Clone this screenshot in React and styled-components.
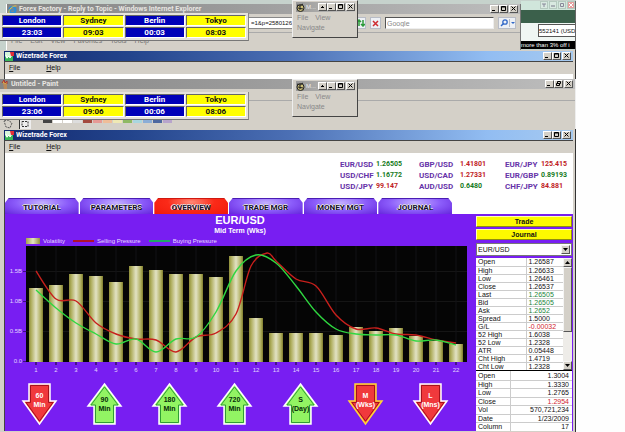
import React from "react";
import styled, { createGlobalStyle, css } from "styled-components";

const GRAY = "#d4d0c8";
const PURPLE = "#781ef2";
const SANS = '"Liberation Sans", Arial, sans-serif';
const BOLD_FACE = 'Roboto, "Liberation Sans", Arial, sans-serif';

const Global = createGlobalStyle`
  * { box-sizing: border-box; }
  body { margin: 0; background: #fefefe; font-family: ${SANS}; font-size: 7px; line-height: 8px; color: #111; }
  button, input, select { font: inherit; color: inherit; margin: 0; padding: 0; border: 0; border-radius: 0; }
  svg { display: block; }
`;

const Desktop = styled.main`
  display: flex;
  flex-direction: column;
  min-height: 100vh;
  padding-right: 49px;
`;

/* Window chrome */
const TitleBar = styled.header`
  display: flex;
  align-items: center;
  gap: 2px;
  height: 10px;
  padding: 0 2px 0 1px;
  color: ${(p) => (p.$active ? "#fff" : "#e8e6e2")};
  font: bold 7px/8px ${BOLD_FACE};
  background: ${(p) =>
    p.$active
      ? "linear-gradient(90deg, #12296f, #23448c 22%, #4b6fb4 50%, #92bdf2 85%, #a6caf0)"
      : "linear-gradient(90deg, #858585, #999 40%, #bdbdbd)"};
`;
const Title = styled.span`
  flex: 1;
  min-width: 0;
  overflow: hidden;
  white-space: nowrap;
`;
const Controls = styled.div`
  display: flex;
  button:last-child { margin-left: 1px; }
`;
const ControlButton = styled.button`
  width: 9px;
  height: 8px;
  background: ${GRAY};
  border: 1px solid;
  border-color: #fff #555 #555 #fff;
  svg { width: 7px; height: 6px; }
`;
const glyphs = {
  min: <path d="M1 4.500h3" />,
  max: <path d="M1.500 .5h4v4h-4zM1.500 1h4" />,
  restore: <path d="M2.500 .5h3v2h-3zM1.500 2.500h3v2h-3z" />,
  close: <path d="M1.500 .5l4 4M5.500 .5l-4 4" />,
  roll: <path d="M2 3.500h3M3 2.500h1" />,
};
const names = { min: "Minimize", max: "Maximize", restore: "Restore", close: "Close", roll: "Roll up" };
const WindowControls = ({ kinds = ["min", "max", "close"] }) => (
  <Controls>
    {kinds.map((k) => (
      <ControlButton key={k} aria-label={names[k]}>
        <svg viewBox="0 0 7 6" fill="none" stroke="#000">{glyphs[k]}</svg>
      </ControlButton>
    ))}
  </Controls>
);

const MenuBar = styled.nav`
  display: flex;
  align-items: center;
  gap: ${(p) => (p.$dim ? 8 : 26)}px;
  height: ${(p) => (p.$dim ? 16 : 12)}px;
  padding-left: 4px;
  background: ${GRAY};
  color: ${(p) => (p.$dim ? "#777" : "#111")};
`;
const MenuItem = styled.button`
  background: none;
  &::first-letter { text-decoration: ${(p) => (p.$plain ? "none" : "underline")}; }
`;

const WizeIcon = () => (
  <svg width="9" height="9" viewBox="0 0 9 9">
    <rect width="8" height="9" fill="#d5f5d8" />
    <path d="M0 8V4l2 3 2-3 1 2 3-4v7H0z" fill="#38b657" />
    <path d="M1 3l1 3 2-2 1 2 2-3" fill="none" stroke="#fff" />
    <path d="M5 0h4v4H6z" fill="#e32e36" />
  </svg>
);

/* Browser window with the page behind it */
const TopRow = styled.section`
  display: flex;
  height: 50px;
  background: #c6d2cc;
`;
const Browser = styled.div`
  flex: 1;
  min-width: 0;
  margin: 4px 0 0 6px;
  border-left: 1px solid #fff;
  border-right: 1px solid #777;
  background: ${GRAY};
`;
const AddressRow = styled.div`
  display: flex;
  align-items: center;
  gap: 4px;
  height: 19px;
  padding-right: 4px;
  border-bottom: 1px solid #aaa;
`;
const AddressInput = styled.input`
  flex: 1;
  min-width: 0;
  height: 12px;
  padding-left: 243px;
  background: #fff;
  border: 1px solid #888;
  font-size: 6px;
`;
const ToolButton = styled.button`
  display: grid;
  place-items: center;
  width: ${(p) => (p.$wide ? 18 : 11)}px;
  height: 12px;
  background: #edf0f5;
  border: 1px solid #b8bcc6;
`;
const SearchInput = styled.input`
  width: 109px;
  height: 12px;
  padding-left: 1px;
  background: #fff;
  border: 1px solid;
  border-color: #555 #eee #eee #555;
  color: #888;
  &::placeholder { color: #888; opacity: 1; }
`;
const Behind = styled.div`
  display: flex;
  flex-direction: column;
  width: 55px;
  margin-top: 1px;
  border-right: 1px solid #666;
`;
const BehindTitle = styled.div`
  display: flex;
  justify-content: flex-end;
  gap: 1px;
  height: 9px;
  background: #d0e6db;
`;
const FaintButton = styled.button`
  display: grid;
  place-items: center;
  width: 8px;
  height: 8px;
  border: 1px solid #b5c9bf;
  background: ${(p) => (p.$red ? "#e6a09f" : "#d9e9e1")};
`;
const GreenBand = styled.div`
  height: 13px;
  background: #3b604b;
`;
const BehindBody = styled.div`
  display: flex;
  justify-content: flex-end;
  height: 18px;
  padding-top: 1px;
  background: #f0f6f3;
`;
const AccountBox = styled.input`
  width: 37px;
  height: 13px;
  border: 1px solid #555;
  border-right: 0;
  background: #fff;
  font-size: 6px;
`;
const Ticker = styled.div`
  height: 8px;
  white-space: nowrap;
  background: #000;
  color: #fff;
  font-size: 6px;
`;

/* Paint window */
const PaintWindow = styled.section`
  height: 50px;
  background: ${GRAY};
  border-right: 1px solid #eee;
`;
const PaintMenuStrip = styled.div`
  height: 12px;
  border-bottom: 1px solid #aaa;
`;
const PaintTools = styled.div`
  display: flex;
  align-items: flex-start;
  gap: 6px;
  height: 28px;
  padding: 18px 0 0 3px;
`;
const Swatches = styled.div`
  display: flex;
  gap: 1px;
  margin-left: 6px;
`;
const Swatch = styled.i`
  width: 9px;
  height: 4px;
  background: ${(p) => p.$color};
`;

/* Floating widgets */
const ClockPanel = styled.div`
  position: absolute;
  z-index: 2;
  top: ${(p) => p.$top}px;
  left: 0;
  width: 249px;
  padding: 1px;
  background: #e6e3dc;
  border-bottom: 1px solid #777;
  border-right: 1px solid #888;
`;
const ClockTable = styled.table`
  width: 100%;
  table-layout: fixed;
  border-spacing: 1px;
  th, td {
    height: 11px;
    padding: 0;
    text-align: center;
    font: bold 8px/9px ${BOLD_FACE};
    border: 1px solid;
    border-color: #666 #fff #fff #666;
    background: #0000b8;
    color: #fff;
  }
  th:nth-child(even), td:nth-child(even) { background: #ffff00; color: #111; }
`;
const Palette = styled.div`
  position: absolute;
  z-index: 3;
  top: ${(p) => p.$top}px;
  left: 292px;
  width: 66px;
  height: 38px;
  padding: 1px 2px 0 3px;
  background: ${GRAY};
  border: 1px solid;
  border-color: #eee #444 #444 #eee;
  color: #888;
`;
const PaletteTitle = styled.div`
  display: flex;
  align-items: center;
  gap: 1px;
  height: 10px;
  margin-bottom: 2px;
  background: linear-gradient(90deg, #999, #c8c6c2);
  color: #eee;
  font-size: 6px;
`;
const PaletteMenu = styled.div`
  display: flex;
  flex-wrap: wrap;
  gap: 2px 7px;
  padding-left: 1px;
`;

const Clocks = ({ top, times }) => (
  <ClockPanel $top={top}>
    <ClockTable>
      <thead><tr>{["London", "Sydney", "Berlin", "Tokyo"].map((c) => <th key={c}>{c}</th>)}</tr></thead>
      <tbody><tr>{times.map((t) => <td key={t}>{t}</td>)}</tr></tbody>
    </ClockTable>
  </ClockPanel>
);
const NavPalette = ({ top }) => (
  <Palette $top={top}>
    <PaletteTitle>
      <svg width="9" height="9" viewBox="0 0 9 9">
        <circle cx="4.5" cy="5" r="3.5" fill="#cfc27a" stroke="#222" />
        <path d="M1 2l3 1 3-2M2 5l5 1M4 3v4" stroke="#222" fill="none" />
      </svg>
      <Title>M...</Title>
      <WindowControls kinds={["roll", "min", "max", "close"]} />
    </PaletteTitle>
    <PaletteMenu>
      <MenuItem $plain>File</MenuItem>
      <MenuItem $plain>View</MenuItem>
      <MenuItem $plain>Navigate</MenuItem>
    </PaletteMenu>
  </Palette>
);

/* Wizetrade window */
const WizeWindow = styled.section`
  display: flex;
  flex-direction: column;
  flex: ${(p) => (p.$grow ? 1 : "none")};
  padding: 1px 2px ${(p) => (p.$grow ? 2 : 0)}px 4px;
  background: ${GRAY};
  border-right: 1px solid #333;
`;
const Client = styled.div`
  display: flex;
  flex-direction: column;
  flex: 1;
  border-left: 1px solid #444;
  border-top: 1px solid #444;
  background: #fff;
`;
const EmptyStrip = styled.div`
  height: 5px;
`;
const Quotes = styled.dl`
  display: grid;
  grid-template-columns: 36px 43px 41px 45px 36px 32px;
  grid-auto-rows: 11px;
  justify-content: end;
  height: 45px;
  margin: 0;
  padding-top: 6px;
  font: bold 8px/11px ${BOLD_FACE};
`;
const Pair = styled.dt`
  color: #6633a8;
`;
const Rate = styled.dd`
  margin: 0;
  font-size: 7px;
  color: ${(p) => (p.$up ? "#157a22" : "#c01c24")};
`;
const Tabs = styled.nav`
  display: grid;
  grid-template-columns: repeat(6, 1fr);
  gap: 1px;
  height: 16px;
  margin-right: 121px;
`;
const Tab = styled.button`
  padding-top: 3px;
  font: bold 8px/12px ${BOLD_FACE};
  color: #15102a;
  text-shadow: -1px 0 #fff, 0 -1px #ddd;
  white-space: nowrap;
  clip-path: polygon(0 30%, 5% 0, 95% 0, 100% 30%, 100% 100%, 0 100%);
  background: ${(p) =>
    p.$active
      ? "radial-gradient(ellipse at 50% 20%, #ff8a78, #fb2a18 45%, #f01a0c)"
      : "radial-gradient(ellipse at 50% 25%, #c3b0ff, #8b5cfa 50%, #6526dc)"};
  border-top: 1px solid ${(p) => (p.$active ? "#d01810" : "#4a1cb4")};
`;
const Body = styled.div`
  display: flex;
  flex: 1;
  background: ${PURPLE};
`;
const ChartPanel = styled.div`
  display: flex;
  flex-direction: column;
  flex: 1;
  min-width: 0;
  color: #fff;
`;
const ChartTitle = styled.h1`
  margin: 0;
  text-align: center;
  font: bold 11px/12px ${SANS};
`;
const ChartSubtitle = styled.h2`
  margin: 0;
  text-align: center;
  font: bold 7px/10px ${SANS};
`;
const Legend = styled.div`
  display: flex;
  gap: 8px;
  height: 10px;
  padding-left: 21px;
  font-size: 6px;
  color: #e7dcff;
`;
const LegendItem = styled.span`
  display: flex;
  align-items: center;
  gap: 3px;
`;
const barFill = "linear-gradient(90deg, #a3a24b, #e4e4c2 50%, #92913c)";
const LegendKey = styled.i`
  width: ${(p) => (p.$line ? 21 : 14)}px;
  height: ${(p) => (p.$line ? 2 : 6)}px;
  background: ${(p) => p.$line || barFill};
`;
const ChartSvg = styled.svg`
  width: 100%;
  height: auto;
  font-family: ${SANS};
  font-size: 6px;
`;
const Arrows = styled.div`
  display: flex;
  justify-content: space-between;
  padding: 7px 27px 0 17px;
`;
const ArrowButton = styled.button`
  width: 35px;
  height: 42px;
  background: none;
  svg { overflow: visible; font: bold 7px ${SANS}; text-anchor: middle; }
`;

/* Side panel */
const Side = styled.aside`
  display: flex;
  flex-direction: column;
  width: 98px;
  padding: 2px 1px 0;
`;
const YellowButton = styled.button`
  height: 11px;
  margin-bottom: 2px;
  background: #fdfa00;
  border: 1px solid;
  border-color: #ffffb0 #8f8c10 #8f8c10 #ffffb0;
  font-weight: bold;
  line-height: 8px;
`;
const SelectWrap = styled.label`
  display: grid;
  grid-template-columns: 1fr 9px;
  height: 13px;
  margin: 1px 0 2px;
  padding: 1px;
  background: #fff;
  border: 1px solid #777;
`;
const PairSelect = styled.select`
  appearance: none;
  background: #fff;
  outline: 0;
`;
const Bevel = css`
  background: ${GRAY};
  border: 1px solid;
  border-color: #f5f5f5 #555 #555 #f5f5f5;
`;
const SmallArrow = styled.span`
  ${Bevel}
  display: grid;
  place-items: center;
  height: 9px;
`;
const Triangle = ({ up }) => (
  <svg width="5" height="3" viewBox="0 0 5 3"><path d={up ? "M0 3l2.5-3L5 3z" : "M0 0h5L2.500 3z"} fill="#000" /></svg>
);
const ListBox = styled.div`
  display: flex;
  background: #fff;
  border-bottom: 1px solid #000;
`;
const DataTable = styled.table`
  flex: 1;
  width: 100%;
  table-layout: fixed;
  border-collapse: collapse;
  background: #fff;
  font: 7px/7px ${SANS};
  tr { height: 8px; }
  tr:nth-child(odd) { height: ${(p) => (p.$right ? 9 : 8)}px; }
  th, td {
    padding: 0 2px;
    text-align: left;
    font-weight: normal;
    border-bottom: 1px solid #ccc;
  }
  tr:last-child > * { border-bottom: 0; }
  th { width: ${(p) => p.$label}px; border-right: 1px solid #ccc; }
  td { text-align: ${(p) => (p.$right ? "right" : "left")}; padding-right: ${(p) => (p.$right ? 3 : 0)}px; }
`;
const Value = styled.td`
  color: ${(p) => p.$color || "#111"};
`;
const ScrollBar = styled.div`
  display: flex;
  flex-direction: column;
  width: 9px;
  background: #eeece8;
`;
const Thumb = styled.div`
  ${Bevel}
  height: 65px;
  margin-bottom: auto;
`;

const G = "#23863a";
const R = "#d22630";
const quotes = [
  ["EUR/USD", "1.26505", 1], ["GBP/USD", "1.41801", 0], ["EUR/JPY", "125.415", 0],
  ["USD/CHF", "1.16772", 1], ["USD/CAD", "1.27331", 0], ["EUR/GBP", "0.89193", 1],
  ["USD/JPY", "99.147", 0], ["AUD/USD", "0.6480", 1], ["CHF/JPY", "84.881", 0],
];
const stats = [
  ["Open", "1.26587"], ["High", "1.26633"], ["Low", "1.26461"], ["Close", "1.26537"],
  ["Last", "1.26505", G], ["Bid", "1.26505", G], ["Ask", "1.2652", G], ["Spread", "1.5000"],
  ["G/L", "-0.00032", R], ["52 High", "1.6038"], ["52 Low", "1.2328"], ["ATR", "0.05448"],
  ["Cht High", "1.4719"], ["Cht Low", "1.2328"],
];
const column = [
  ["Open", "1.3004"], ["High", "1.3330"], ["Low", "1.2765"], ["Close", "1.2954", R],
  ["Vol", "570,721,234"], ["Date", "1/23/2009"], ["Column", "17"],
];

const barTops = [42, 39, 28, 30, 36, 20, 24, 28, 28, 31, 10, 72, 87, 87, 87, 89, 81, 85, 82, 90, 95, 98];
const at = (i) => 31 + i * 20;
const selling = [25, 53, 55, 77, 88, 93, 94, 106, 91, 87, 68, 11, 15, 33, 40, 69, 83, 82, 88, 89, 94, 97].map((y, i) => [at(i), y]);
selling.splice(11, 1, [246, 20], [262, 7]);
const buying = [44, 62, 77, 88, 98, 93, 106, 93, 91, 66, 25, 9, 17, 40, 66, 83, 88, 89, 89, 95, 94, 99].map((y, i) => [at(i), y]);

const smooth = (pts) =>
  pts.slice(1).reduce((d, p, i) => {
    const a = pts[i];
    const before = pts[i - 1] || a;
    const after = pts[i + 2] || p;
    const c1 = [a[0] + (p[0] - before[0]) / 6, a[1] + (p[1] - before[1]) / 6];
    const c2 = [p[0] - (after[0] - a[0]) / 6, p[1] - (after[1] - a[1]) / 6];
    return `${d}C${c1} ${c2} ${p}`;
  }, `M${pts[0]}`);

const Chart = () => (
  <ChartSvg viewBox="0 0 470 130" role="img" aria-label="Volatility, selling pressure and buying pressure">
    <defs>
      <linearGradient id="bar">
        <stop offset="0" stopColor="#8f8e39" />
        <stop offset=".15" stopColor="#aead5c" />
        <stop offset=".5" stopColor="#e2e2c4" />
        <stop offset=".85" stopColor="#aead5c" />
        <stop offset="1" stopColor="#7d7c2c" />
      </linearGradient>
    </defs>
    <rect x="21" width="441" height="116" fill="#050505" />
    {[25, 55, 85].map((y) => <path key={y} d={`M21 ${y}.5h441`} stroke="#151515" />)}
    {barTops.map((y, i) => (
      <g key={i}>
        <path d={`M${at(i)} 0v119`} stroke="#121216" />
        <rect x={at(i) - 7} y={y} width="14" height={116 - y} fill="url(#bar)" />
        <text x={at(i)} y="126" textAnchor="middle" fill="#e0d2ff">{i + 1}</text>
      </g>
    ))}
    {["1.5B", "1.0B", "0.5B", "0.0"].map((t, i) => (
      <g key={t}>
        <text x="17" y={27 + i * 30} textAnchor="end" fill="#e0d2ff">{t}</text>
        <path d={`M18 ${25 + i * 30}.5h3`} stroke="#3c0f80" />
      </g>
    ))}
    <path d={smooth(selling)} fill="none" stroke="#c8201c" strokeWidth="1.4" />
    <path d={smooth(buying)} fill="none" stroke="#2fd840" strokeWidth="1.4" />
  </ChartSvg>
);

const arrows = [
  ["60", "Min", 0], ["90", "Min", 1], ["180", "Min", 1], ["720", "Min", 1],
  ["S", "(Day)", 1], ["M", "(Wks)", 0, "#ffd935"], ["L", "(Mns)", 0],
];
const Arrow = ({ a, b, up, edge = "#fff" }) => {
  const shape = up ? "M17.5 1L34 23H28V41H7V23H1Z" : "M7 1H28V18H34L17.5 41L1 18H7Z";
  return (
    <ArrowButton aria-label={`${a} ${b}`}>
      <svg width="35" height="42" viewBox="0 0 35 42">
        <path d={shape} fill={up ? "#92f463" : "#f0393c"} stroke={edge} strokeWidth="1.5" />
        <path
          d={up ? "M17.5 4L31 22H26.500V39.500H8.500V22H4Z" : "M8.500 2.500H26.500V19.500H31L17.500 38L4 19.500H8.500Z"}
          fill="none" stroke={up ? "#2f9e35" : "#a5121c"} strokeWidth="1"
        />
        <text x="17.5" y={up ? 19 : 15} fill={up ? "#062b08" : "#fff"}>{a}</text>
        <text x="17.5" y={up ? 28 : 24} fill={up ? "#062b08" : "#fff"}>{b}</text>
      </svg>
    </ArrowButton>
  );
};

const Rows = ({ data }) => (
  <tbody>
    {data.map(([k, v, c]) => <tr key={k}><th scope="row">{k}</th><Value $color={c}>{v}</Value></tr>)}
  </tbody>
);

const WizeHeader = () => (
  <TitleBar $active><WizeIcon /><Title>Wizetrade Forex</Title><WindowControls /></TitleBar>
);
const WizeMenu = () => (
  <MenuBar><MenuItem>File</MenuItem><MenuItem>Help</MenuItem></MenuBar>
);

export default function App() {
  return (
    <>
      <Global />
      <Desktop>
        <TopRow>
          <Browser>
            <TitleBar>
              <svg width="9" height="9" viewBox="0 0 9 9">
                <circle cx="4.5" cy="5" r="3" fill="none" stroke="#2c8fd8" strokeWidth="2" />
                <path d="M2 5h5" stroke="#2c8fd8" />
                <path d="M1 8C0 5 5 0 8.500 1" fill="none" stroke="#e9c23d" />
              </svg>
              <Title>Forex Factory - Reply to Topic - Windows Internet Explorer</Title>
              <WindowControls />
            </TitleBar>
            <AddressRow>
              <AddressInput aria-label="Address" defaultValue="=1&p=2580126" />
              <ToolButton aria-label="Refresh">
                <svg width="8" height="8" viewBox="0 0 8 8" fill="none" stroke="#2d9a3a" strokeWidth="1.5"><path d="M2 7V2M0 3l2-2 2 2M6 1v5M4 5l2 2 2-2" /></svg>
              </ToolButton>
              <ToolButton aria-label="Stop">
                <svg width="7" height="7" viewBox="0 0 7 7" stroke="#cf2b30" strokeWidth="1.5"><path d="M1 1l5 5M6 1L1 6" /></svg>
              </ToolButton>
              <SearchInput aria-label="Search" placeholder="Google" />
              <ToolButton $wide aria-label="Run search">
                <svg width="15" height="8" viewBox="0 0 15 8" fill="none" stroke="#3168c8"><circle cx="5" cy="3" r="2.200" strokeWidth="1.300" /><path d="M3.500 4.500L1 7" strokeWidth="1.500" /><path d="M9.500 0v8" stroke="#b8bcc6" /><path d="M11 3h4l-2 2z" fill="#3168c8" stroke="none" /></svg>
              </ToolButton>
            </AddressRow>
            <MenuBar $dim>
              {["File", "Edit", "View", "Favorites", "Tools", "Help"].map((m) => <MenuItem key={m} $plain>{m}</MenuItem>)}
            </MenuBar>
          </Browser>
          <Behind>
            <BehindTitle>
              <FaintButton aria-label="Help"><svg width="4" height="4"><path d="M0 1h4M2 1v3" stroke="#889" /></svg></FaintButton>
              <FaintButton aria-label="Minimize"><svg width="4" height="4"><path d="M0 3h4" stroke="#778" /></svg></FaintButton>
              <FaintButton aria-label="Restore"><svg width="4" height="4"><path d="M.5.5h3v3h-3z" stroke="#889" fill="none" /></svg></FaintButton>
              <FaintButton $red aria-label="Close"><svg width="4" height="4"><path d="M0 0l4 4M4 0L0 4" stroke="#fff" /></svg></FaintButton>
            </BehindTitle>
            <GreenBand />
            <BehindBody><AccountBox aria-label="Account" defaultValue="552141 (USD" /></BehindBody>
            <Ticker>more than 3% off i</Ticker>
          </Behind>
        </TopRow>

        <WizeWindow>
          <WizeHeader />
          <Client><WizeMenu /><EmptyStrip /></Client>
        </WizeWindow>

        <PaintWindow>
          <TitleBar>
            <svg width="8" height="9" viewBox="0 0 8 9"><path d="M2 3h4v6H3z" fill="#b98a5b" /><path d="M1 3l2-3 1 3 2-2v3" stroke="#a33" fill="#d9b048" /></svg>
            <Title>Untitled - Paint</Title>
            <WindowControls kinds={["min", "restore", "close"]} />
          </TitleBar>
          <PaintMenuStrip />
          <PaintTools>
            <svg width="10" height="10" viewBox="0 0 10 10" fill="none" stroke="#555" strokeDasharray="2 1"><path d="M1 2l4-1 4 3-2 5-4-1z" /></svg>
            <svg width="12" height="10" viewBox="0 0 12 10" fill="none"><rect width="12" height="10" fill="#eee" /><path d="M.5 10V.5h11" stroke="#333" /><rect x="3" y="2.500" width="6" height="5" stroke="#333" strokeDasharray="2 1" /></svg>
            <Swatches>
              {["#444", "#fff", "#fff", "#ddd", "#a3493e", "#e69a95", "#efbd98", "#efe9b4", "#8fb964", "#a9d6df", "#8badd6", "#4d68a0", "#b7a4cc"].map((c, i) => <Swatch key={i} $color={c} />)}
            </Swatches>
          </PaintTools>
        </PaintWindow>

        <WizeWindow $grow>
          <WizeHeader />
          <Client>
            <WizeMenu />
            <Quotes>
              {quotes.map(([p, v, up]) => (
                <React.Fragment key={p}><Pair>{p}</Pair><Rate $up={up}>{v}</Rate></React.Fragment>
              ))}
            </Quotes>
            <Tabs>
              {["TUTORIAL", "PARAMETERS", "OVERVIEW", "TRADE MGR", "MONEY MGT", "JOURNAL"].map((t) => (
                <Tab key={t} $active={t === "OVERVIEW"}>{t}</Tab>
              ))}
            </Tabs>
            <Body>
              <ChartPanel>
                <ChartTitle>EUR/USD</ChartTitle>
                <ChartSubtitle>Mid Term (Wks)</ChartSubtitle>
                <Legend>
                  <LegendItem><LegendKey />Volatility</LegendItem>
                  <LegendItem><LegendKey $line="#b0122c" />Selling Pressure</LegendItem>
                  <LegendItem><LegendKey $line="#20a868" />Buying Pressure</LegendItem>
                </Legend>
                <Chart />
                <Arrows>
                  {arrows.map(([a, b, up, edge]) => <Arrow key={a} a={a} b={b} up={up} edge={edge} />)}
                </Arrows>
              </ChartPanel>
              <Side>
                <YellowButton>Trade</YellowButton>
                <YellowButton>Journal</YellowButton>
                <SelectWrap>
                  <PairSelect aria-label="Currency pair"><option>EUR/USD</option></PairSelect>
                  <SmallArrow><Triangle /></SmallArrow>
                </SelectWrap>
                <ListBox>
                  <DataTable $label={50}><Rows data={stats} /></DataTable>
                  <ScrollBar>
                    <SmallArrow><Triangle up /></SmallArrow>
                    <Thumb />
                    <SmallArrow><Triangle /></SmallArrow>
                  </ScrollBar>
                </ListBox>
                <DataTable $right $label={34}><Rows data={column} /></DataTable>
              </Side>
            </Body>
          </Client>
        </WizeWindow>
      </Desktop>
      <Clocks top={13} times={["23:03", "09:03", "00:03", "08:03"]} />
      <Clocks top={92} times={["23:06", "09:06", "00:06", "08:06"]} />
      <NavPalette top={0} />
      <NavPalette top={79} />
    </>
  );
}
